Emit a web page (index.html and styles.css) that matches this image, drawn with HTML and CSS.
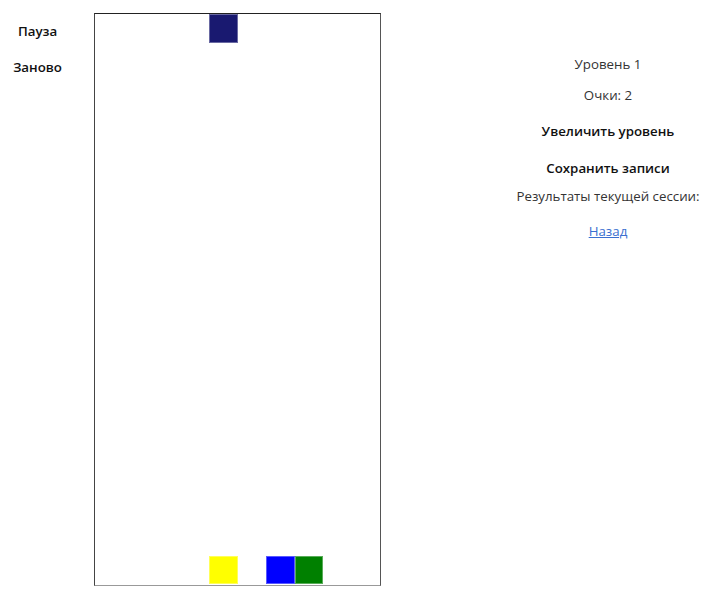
FILE: index.html
```html
<!DOCTYPE html>
<html lang="ru">
<head>
<meta charset="utf-8">
<link rel="stylesheet" href="styles.css">
</head>
<body>
<div class="page">
  <div class="controls">
    <button class="btn">Пауза</button>
    <button class="btn">Заново</button>
  </div>
  <div class="board">
    <div class="cell navy" style="grid-column:5;grid-row:1"></div>
    <div class="cell yellow" style="grid-column:5;grid-row:20"></div>
    <div class="cell blue" style="grid-column:7;grid-row:20"></div>
    <div class="cell green" style="grid-column:8;grid-row:20"></div>
  </div>
  <div class="info">
    <div class="line">Уровень 1</div>
    <div class="line short">Очки: 2</div>
    <button class="btn wide">Увеличить уровень</button>
    <button class="btn wide second">Сохранить записи</button>
    <div class="line">Результаты текущей сессии:</div>
    <a class="back" href="#">Назад</a>
  </div>
</div>
</body>
</html>
```
FILE: styles.css
```css
html, body {
  margin: 0;
  padding: 0;
  background: #fff;
}
body {
  font-family: "Open Sans", "Noto Sans", sans-serif;
  font-size: 13.3px;
  color: #222;
}
.page {
  display: flex;
  align-items: flex-start;
  padding-top: 13px;
}
.controls {
  width: 75px;
  display: flex;
  flex-direction: column;
  align-items: center;
  gap: 10px;
  padding-top: 5px;
}
.btn {
  background: none;
  border: none;
  font: inherit;
  font-weight: 600;
  color: #111;
  padding: 0;
  height: 26px;
  cursor: pointer;
}
.board {
  margin-left: 19px;
  width: 285px;
  height: 571px;
  border-top: 1px solid #222;
  border-left: 1px solid #444;
  border-right: 1px solid #555;
  border-bottom: 1px solid #999;
  display: grid;
  grid-template-columns: repeat(10, 28.5px);
  grid-template-rows: repeat(20, 28.5px);
}
.cell {
  box-sizing: border-box;
  border: 1px solid rgba(255,255,255,0.35);
}
.navy { background: #191970; }
.yellow { background: #ffff00; }
.blue { background: #0000ff; }
.green { background: #008000; }
.info {
  margin-left: auto;
  width: 208px;
  display: flex;
  flex-direction: column;
  align-items: center;
  padding-top: 41px;
}
.line {
  height: 31px;
  line-height: 20px;
  color: #333;
}
.line.short {
  height: 28px;
}
.info .btn.wide {
  height: 36px;
  line-height: 20px;
}
.info .btn.wide.second {
  height: 37px;
}
.back {
  color: #3a6fd0;
  text-decoration: underline;
  line-height: 20px;
  margin-top: 4px;
}
```
